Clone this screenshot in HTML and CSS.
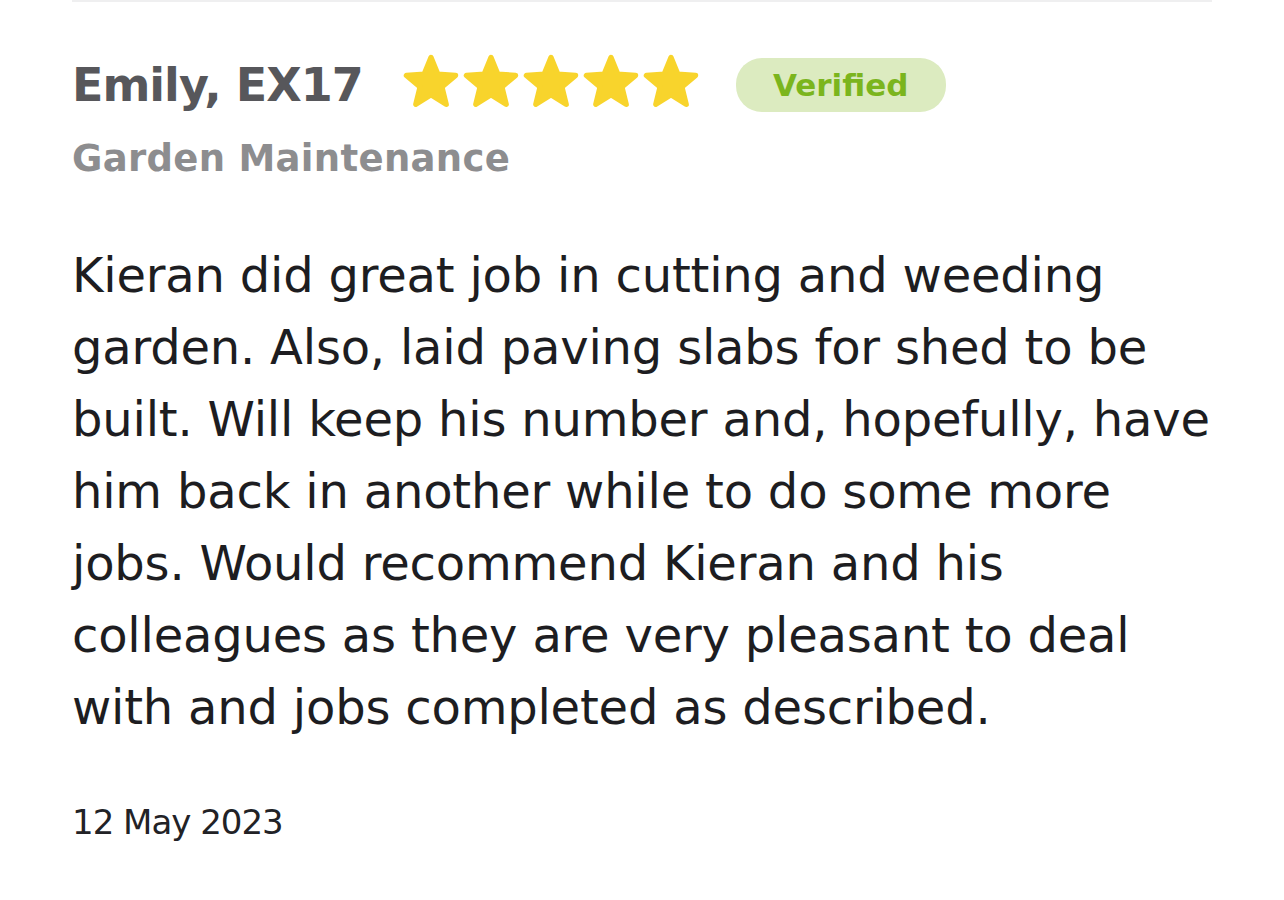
FILE: index.html
```html
<!DOCTYPE html>
<html lang="en">
<head>
  <meta charset="UTF-8" />
  <meta name="viewport" content="width=device-width, initial-scale=1.0"/>
  <title>Review - Emily, EX17</title>
  <link rel="stylesheet" href="styles.css">
</head>
<body>

  <div class="review">
    <div class="divider"></div>

    <div class="review-head">
      <div class="reviewer">Emily, EX17</div>

      <div class="stars">
        <svg class="star" viewBox="0 0 100 100"><polygon points="50,11 61.4,38.7 90.9,40.7 68.1,59.8 75.3,88.8 50,72.9 24.7,88.8 31.9,59.8 9.1,40.7 38.6,38.7"/></svg>
        <svg class="star" viewBox="0 0 100 100"><polygon points="50,11 61.4,38.7 90.9,40.7 68.1,59.8 75.3,88.8 50,72.9 24.7,88.8 31.9,59.8 9.1,40.7 38.6,38.7"/></svg>
        <svg class="star" viewBox="0 0 100 100"><polygon points="50,11 61.4,38.7 90.9,40.7 68.1,59.8 75.3,88.8 50,72.9 24.7,88.8 31.9,59.8 9.1,40.7 38.6,38.7"/></svg>
        <svg class="star" viewBox="0 0 100 100"><polygon points="50,11 61.4,38.7 90.9,40.7 68.1,59.8 75.3,88.8 50,72.9 24.7,88.8 31.9,59.8 9.1,40.7 38.6,38.7"/></svg>
        <svg class="star" viewBox="0 0 100 100"><polygon points="50,11 61.4,38.7 90.9,40.7 68.1,59.8 75.3,88.8 50,72.9 24.7,88.8 31.9,59.8 9.1,40.7 38.6,38.7"/></svg>
      </div>

      <span class="badge">Verified</span>
    </div>

    <div class="service">Garden Maintenance</div>

    <p class="review-text">
      Kieran did great job in cutting and weeding garden. Also, laid paving slabs for shed to be built.
      Will keep his number and, hopefully, have him back in another while to do some more jobs.
      Would recommend Kieran and his colleagues as they are very pleasant to deal with and jobs
      completed as described.
    </p>

    <div class="review-date">12 May 2023</div>
  </div>

</body>
</html>
```
FILE: styles.css
```css
body {
  margin: 0;
  padding: 0;
  background: #fff;
  font-family: 'DejaVu Sans', sans-serif;
}

.review {
  padding: 0 72px;
}

.divider {
  height: 2px;
  background: #efeff0;
}

.review-head {
  display: flex;
  align-items: center;
  height: 54px;
  margin-top: 56px;
}

.reviewer {
  font-size: 46px;
  line-height: 54px;
  font-weight: bold;
  letter-spacing: -1px;
  color: #57575b;
}

.stars {
  display: flex;
  margin: 0 35px 9px 38px;
}

.star {
  width: 60px;
  height: 60px;
}

.star polygon {
  fill: #f8d42c;
  stroke: #f8d42c;
  stroke-width: 9;
  stroke-linejoin: round;
}

.badge {
  display: flex;
  align-items: center;
  justify-content: center;
  width: 210px;
  height: 54px;
  border-radius: 26px;
  background: #dcebc0;
  color: #7bb51d;
  font-size: 31px;
  font-weight: bold;
}

.service {
  margin-top: 25px;
  font-size: 37px;
  line-height: 44px;
  font-weight: bold;
  letter-spacing: 0.3px;
  color: #8d8d8f;
}

.review-text {
  margin: 58px 0 0;
  font-size: 48px;
  line-height: 72px;
  letter-spacing: -0.2px;
  color: #1d1d21;
}

.review-date {
  margin-top: 59px;
  font-size: 34px;
  line-height: 40px;
  letter-spacing: -1px;
  color: #222226;
}
```
